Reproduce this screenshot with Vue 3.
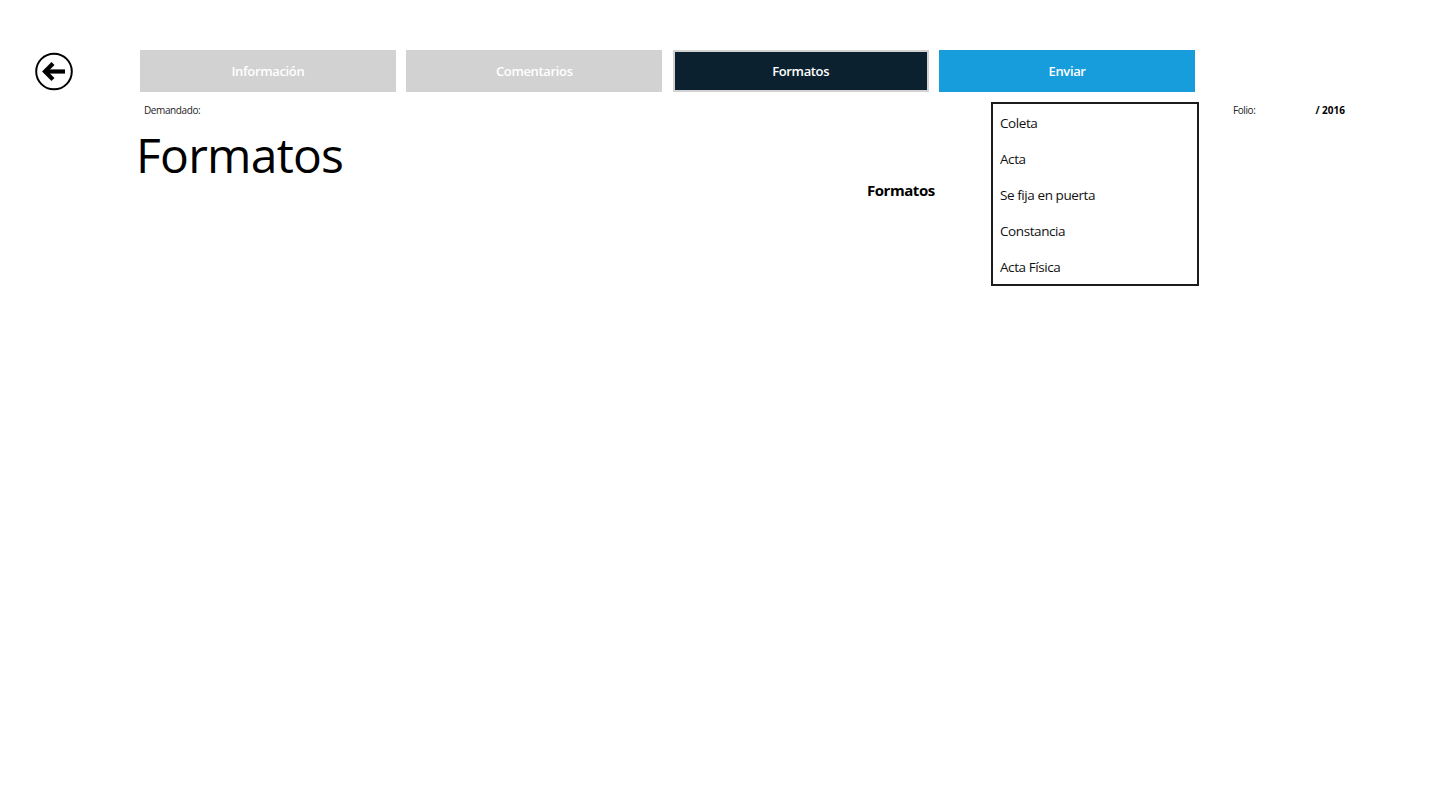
<template>
  <div class="page">
    <header class="top">
      <button class="back" aria-label="Volver">
        <svg width="40" height="40" viewBox="0 0 40 40">
          <circle cx="20" cy="20.5" r="17.8" fill="none" stroke="#000" stroke-width="2" />
          <path d="M11 20.5H31" stroke="#000" stroke-width="4.2" fill="none" />
          <path d="M19 12.5L11 20.5L19 28.5" stroke="#000" stroke-width="4.2" fill="none" />
        </svg>
      </button>
      <nav class="tabs">
        <div v-for="t in tabs" :key="t.label" class="tab" :class="t.kind">{{ t.label }}</div>
      </nav>
    </header>

    <section class="meta">
      <span class="demandado">Demandado:</span>
      <div class="folio">
        <span>Folio:</span>
        <b>/ 2016</b>
      </div>
    </section>

    <h1 class="title">Formatos</h1>
    <div class="label">Formatos</div>

    <ul class="menu">
      <li v-for="item in items" :key="item">{{ item }}</li>
    </ul>
  </div>
</template>

<script setup>
const tabs = [
  { label: 'Información', kind: 'off' },
  { label: 'Comentarios', kind: 'off' },
  { label: 'Formatos', kind: 'current' },
  { label: 'Enviar', kind: 'send' },
]
const items = ['Coleta', 'Acta', 'Se fija en puerta', 'Constancia', 'Acta Física']
</script>

<style>
html, body { margin: 0; background: #fff; }
</style>

<style scoped>
.page {
  position: relative;
  width: 1440px;
  height: 810px;
  overflow: hidden;
  background: #fff;
  color: #000;
  font-family: "Open Sans", "Noto Sans", sans-serif;
}
.top {
  display: flex;
  align-items: center;
  padding: 50px 0 0 33.5px;
}
.back {
  width: 40px;
  height: 40px;
  padding: 0;
  margin-right: 66.5px;
  border: 0;
  background: none;
  display: block;
}
.back svg { display: block; }
.tabs {
  display: flex;
  gap: 10.6px;
}
.tab {
  box-sizing: border-box;
  width: 255.8px;
  height: 42px;
  display: flex;
  align-items: center;
  justify-content: center;
  color: #fff;
  font-size: 13px;
  font-weight: 600;
  letter-spacing: -0.35px;
}
.off { background: #d2d2d2; }
.current { background: #0c2130; border: 2px solid #d2d2d2; }
.send { background: #179cdc; }
.meta {
  display: flex;
  justify-content: space-between;
  margin-top: 11px;
  padding: 0 95px 0 144px;
  font-size: 10px;
  line-height: 14px;
  letter-spacing: -0.4px;
  color: #222;
}
.folio {
  display: flex;
  gap: 60px;
}
.folio b { color: #000; font-weight: 700; letter-spacing: 0; }
.title {
  margin: 6px 0 0 136px;
  font-size: 48px;
  line-height: 64px;
  font-weight: 400;
  letter-spacing: -0.75px;
}
.label {
  position: absolute;
  left: 867px;
  top: 180px;
  font-size: 15px;
  line-height: 20px;
  font-weight: 700;
  letter-spacing: -0.45px;
}
.menu {
  position: absolute;
  left: 991px;
  top: 102px;
  box-sizing: border-box;
  width: 208px;
  height: 184px;
  margin: 0;
  padding: 2px 0 0;
  list-style: none;
  background: #fff;
  border: 2px solid #1c1c1c;
}
.menu li {
  height: 36px;
  padding-left: 7px;
  font-size: 13.5px;
  line-height: 35px;
  letter-spacing: -0.42px;
  color: #111;
}
</style>
